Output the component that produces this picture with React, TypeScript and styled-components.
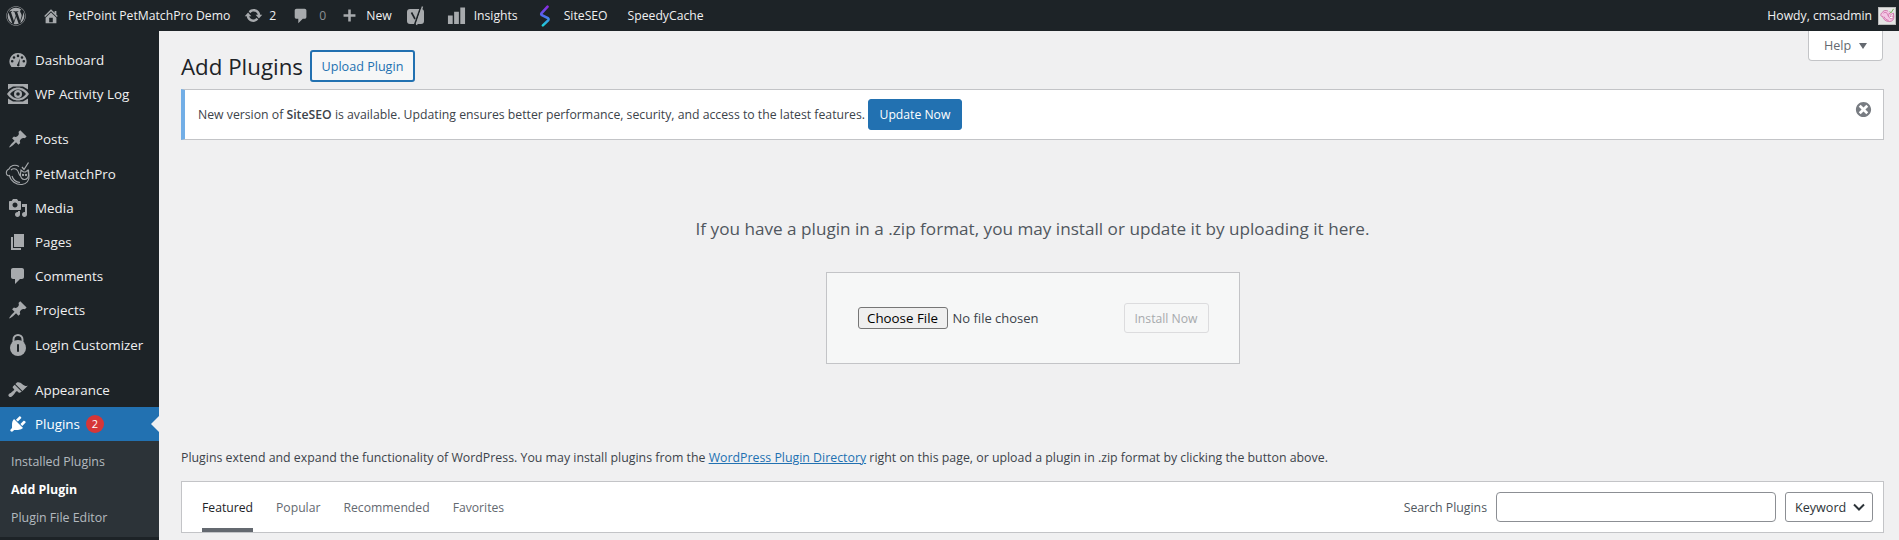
import React from "react";
import styled, { createGlobalStyle } from "styled-components";
import { FaWordpress } from "react-icons/fa";

const FONT = `"Open Sans", "Noto Sans", sans-serif`;

const Icon = ({ d, size = 20 }: { d: string; size?: number }) => (
  <svg width={size} height={size} viewBox="0 0 20 20" fill="currentColor" aria-hidden="true">
    <path d={d} />
  </svg>
);

const paths = {
  home: "M16 8.5l1.53 1.53-1.06 1.06L10 4.62l-6.47 6.47-1.06-1.06L10 2.5l4 4v-2h2v4zm-6-2.46l6 5.99V18H4v-5.97zM12 17v-5H8v5h4z",
  update:
    "M10.2 3.28c3.53 0 6.43 2.61 6.92 6h2.08l-3.5 4-3.5-4h2.32c-.45-1.97-2.21-3.45-4.32-3.45-1.45 0-2.73.71-3.54 1.78L4.95 5.66C6.23 4.2 8.11 3.28 10.2 3.28zm-.4 13.44c-3.52 0-6.43-2.61-6.92-6H.8l3.5-4c1.17 1.33 2.33 2.67 3.5 4H5.48c.45 1.97 2.21 3.45 4.32 3.45 1.45 0 2.73-.71 3.54-1.78l1.71 1.95c-1.28 1.46-3.15 2.38-5.25 2.38z",
  comment: "M5 2h9c1.1 0 2 .9 2 2v7c0 1.1-.9 2-2 2h-2l-5 5v-5H5c-1.1 0-2-.9-2-2V4c0-1.1.9-2 2-2z",
  plus: "M8.5 3h3v5.5H17v3h-5.5V17h-3v-5.5H3v-3h5.5z",
  bars: "M1 10h5v9H1zM7.5 6h5v13h-5zM14 1.5h5V19h-5z",
  dashboard:
    "M10 3a8.5 8.5 0 0 0-6.6 13.9h13.2A8.5 8.5 0 0 0 10 3zM6 6.2a1.3 1.3 0 1 1 0 2.6 1.3 1.3 0 0 1 0-2.6zm4-1.6a1.3 1.3 0 1 1 0 2.6 1.3 1.3 0 0 1 0-2.6zm4 1.6a1.3 1.3 0 1 1 0 2.6 1.3 1.3 0 0 1 0-2.6zM4.2 10a1.3 1.3 0 1 1 0 2.6 1.3 1.3 0 0 1 0-2.6zm11.6 0a1.3 1.3 0 1 1 0 2.6 1.3 1.3 0 0 1 0-2.6zM9 15.3c0-.5.2-1 .6-1.3L12 8.6l-.7 5.8c.1.3.2.6.2.9 0 .6-.5 1.2-1.2 1.2S9 15.9 9 15.3z",
  pin: "M10.44 3.02l1.82-1.82 6.36 6.35-1.83 1.82c-1.05-.68-2.48-.57-3.41.36l-.75.75c-.92.93-1.04 2.35-.35 3.41l-1.83 1.82-2.41-2.41-2.8 2.79c-.42.42-3.38 2.71-3.8 2.29s1.86-3.39 2.28-3.81l2.79-2.79L4.1 9.36l1.83-1.82c1.05.69 2.48.57 3.4-.36l.75-.75c.93-.92 1.05-2.35.36-3.41z",
  media:
    "M13 11V4c0-.55-.45-1-1-1h-1.67L9 1H5L3.67 3H2c-.55 0-1 .45-1 1v7c0 .55.45 1 1 1h10c.55 0 1-.45 1-1zM7 4.5c1.38 0 2.5 1.12 2.5 2.5S8.38 9.5 7 9.5 4.5 8.38 4.5 7 5.62 4.5 7 4.5zM14 6h5v10.5c0 1.38-1.12 2.5-2.5 2.5S14 17.88 14 16.5s1.12-2.5 2.5-2.5c.17 0 .34.02.5.05V9h-3V6zm-4 8.05V13h2v3.5c0 1.38-1.12 2.5-2.5 2.5S7 17.88 7 16.5 8.12 14 9.5 14c.17 0 .34.02.5.05z",
  page: "M6 15V2h10v13H6zm-1 1h8v2H3V5h2v11z",
  appearance:
    "M14.48 11.06L7.41 3.99l1.5-1.5c.5-.56 2.3-.47 3.51.32 1.21.8 1.43 1.28 2.91 2.1 1.18.64 2.45 1.26 4.45.85zm-.71.71L6.7 4.7 4.93 6.47c-.39.39-.39 1.02 0 1.41l1.06 1.06c.39.39.39 1.03 0 1.42-.6.6-1.43 1.11-2.21 1.69-.35.26-.7.53-1.01.84C1.43 13.23.4 14.22.4 15.25c0 .29.09.58.27.86.17.28.42.53.7.7.28.17.57.26.86.26 1.03 0 2.02-1.03 3.36-2.37.31-.31.58-.66.84-1.01.58-.78 1.09-1.61 1.69-2.21.39-.39 1.03-.39 1.42 0l1.06 1.06c.39.39 1.02.39 1.41 0z",
  plugins:
    "M13.11 4.36L9.87 7.6 8 5.73l3.24-3.24c.35-.34 1.05-.2 1.56.32.52.51.66 1.21.31 1.55zm-8 1.77l.91-1.12 9.01 9.01-1.19.84c-.71.71-2.63 1.16-3.82 1.16H6.14L4.9 17.26c-.59.59-1.54.59-2.12 0-.59-.58-.59-1.53 0-2.12l1.24-1.24v-3.88c0-1.13.4-3.19 1.09-3.89zm7.26 3.97l3.24-3.24c.34-.35 1.04-.21 1.55.31.52.51.66 1.21.31 1.55l-3.24 3.25z",
  dismiss:
    "M10 2c4.42 0 8 3.58 8 8s-3.58 8-8 8-8-3.58-8-8 3.58-8 8-8zm5 11l-3-3 3-3-2-2-3 3-3-3-2 2 3 3-3 3 2 2 3-3 3 3z",
};

const YoastIcon = () => (
  <svg width="20" height="22" viewBox="0 0 20 22" aria-hidden="true">
    <rect x="1" y="4" width="17" height="15" rx="3" fill="#a7aaad" />
    <path d="M5.5 7.5 9 14" fill="none" stroke="#1d2327" strokeWidth="1.6" />
    <path d="M15 1.5 8.5 20" fill="none" stroke="#1d2327" strokeWidth="1.6" />
    <path d="M16.5 1.5 10.5 20" fill="none" stroke="#a7aaad" strokeWidth="1.4" />
  </svg>
);

const SiteSeoIcon = () => (
  <svg width="12" height="22" viewBox="0 0 14 26" fill="none" aria-hidden="true">
    <defs>
      <linearGradient id="siteseo" x1="0" y1="0" x2="0" y2="1">
        <stop offset="0" stopColor="#8a2be2" />
        <stop offset="0.5" stopColor="#4f6cf0" />
        <stop offset="1" stopColor="#1fd0d8" />
      </linearGradient>
    </defs>
    <path
      d="M10 2 3 9.5c-.8 1-.6 2 .4 2.6l7 3.4c1 .7 1.1 1.8.3 2.7L4.5 24"
      stroke="url(#siteseo)"
      strokeWidth="3"
      strokeLinecap="round"
    />
  </svg>
);

const ActivityIcon = () => (
  <svg width="24" height="22" viewBox="0 0 24 22" aria-hidden="true">
    <path d="M2 1h20v5.5L17 3.5H7L2 6.5zM2 21h20v-5.5l-5 3H7l-5-3z" fill="#a7aaad" />
    <path d="M1 11C4 6.5 8 4.5 12 4.5S20 6.5 23 11c-3 4.5-7 6.5-11 6.5S4 15.5 1 11z" fill="#a7aaad" />
    <path d="M4 11c2.5-3 5-4.5 8-4.5s5.5 1.500 8 4.5c-2.500 3-5 4.500-8 4.500S6.500 14 4 11z" fill="#1d2327" />
    <circle cx="12" cy="11" r="4" fill="#a7aaad" />
    <circle cx="12" cy="11" r="1.8" fill="#1d2327" />
  </svg>
);

const PetIcon = ({
  size = 26,
  color = "#a7aaad",
  fill = "none",
  check = "#a7aaad",
}: {
  size?: number;
  color?: string;
  fill?: string;
  check?: string;
}) => (
  <svg width={size} height={size} viewBox="0 0 26 26" fill="none" stroke={color} strokeWidth="1.1" aria-hidden="true">
    <path
      d="M14 5.5C10 3 5 4.5 4 8c-2 1-3 3-2.5 5 .5 1.5 2 2 3 1.500C5.500 20 11 24 17 23.500c4.500-.5 7.500-4 7-8.500l-.5-6"
      fill={fill}
    />
    <path d="M6 9c2-2 5-1.5 6.5.5 1.5 2 1 4 3 5.5" />
    <path
      d="M15.5 13l.5-4 2.5 2h2l2.5-2 .5 4c.5 3-1.5 5.5-4 5.5s-4.5-2.5-4-5.5z"
      fill={fill === "none" ? "none" : "#fff"}
    />
    <path d="M7 15c1 3.5 4 6 8 6.5" />
    <path d="M17 6l2 2.5L23.5 1.5" strokeWidth="1.3" stroke={check} />
    <circle cx="18" cy="14" r=".6" fill={color} />
    <circle cx="21" cy="14" r=".6" fill={color} />
  </svg>
);

const LockIcon = () => (
  <svg width="20" height="24" viewBox="0 0 20 24" aria-hidden="true">
    <path d="M5.5 10V6.5a4.5 4.5 0 0 1 9 0V10" fill="none" stroke="#a7aaad" strokeWidth="2" />
    <circle cx="10" cy="15" r="8" fill="#a7aaad" />
    <rect x="9" y="11" width="2" height="8" rx="1" fill="#1d2327" />
  </svg>
);

const GlobalStyle = createGlobalStyle`
  html, body { margin: 0; padding: 0; height: 540px; overflow: hidden; background: #f0f0f1; }
  * { box-sizing: border-box; }
  body { font-family: ${FONT}; font-size: 12.4px; color: #3c434a; }
`;

const Page = styled.div`
  width: 1899px;
  height: 540px;
  display: flex;
  flex-direction: column;
  overflow: hidden;
`;

const AdminBar = styled.header`
  height: 31px;
  flex: none;
  display: flex;
  align-items: center;
  background: #1d2327;
  color: #f0f0f1;
  padding: 0 3px 0 6px;
`;

const BarGroup = styled.div`
  display: flex;
  align-items: center;
  height: 100%;
`;

const BarSpacer = styled.div`
  flex: 1;
`;

const BarItem = styled.div<{ $gap?: number; $left?: number; $muted?: boolean }>`
  display: flex;
  align-items: center;
  gap: ${(p) => p.$gap ?? 6}px;
  margin-left: ${(p) => p.$left ?? 0}px;
  font-size: 12.2px;
  color: ${(p) => (p.$muted ? "#8c8f94" : "#f0f0f1")};
  white-space: nowrap;
  svg { color: #a7aaad; flex: none; }
`;

const Avatar = styled.div`
  width: 18px;
  height: 18px;
  background: #e4e4e4;
  border: 1px solid #bbb;
  display: flex;
  align-items: center;
  justify-content: center;
  svg { display: block; }
`;

const Body = styled.div`
  flex: 1;
  display: flex;
  min-height: 0;
`;

const Sidebar = styled.nav`
  width: 159px;
  flex: none;
  background: #1d2327;
  padding-top: 12px;
`;

const MenuItem = styled.div<{ $active?: boolean; $after?: boolean }>`
  position: relative;
  height: 34.2px;
  margin-bottom: ${(p) => (p.$after ? 11 : 0)}px;
  display: flex;
  align-items: center;
  font-size: 13.4px;
  color: ${(p) => (p.$active ? "#fff" : "#f0f0f1")};
  background: ${(p) => (p.$active ? "#2271b1" : "transparent")};
  &::after {
    content: "";
    display: ${(p) => (p.$active ? "block" : "none")};
    position: absolute;
    right: 0;
    top: 50%;
    margin-top: -8px;
    border: 8px solid transparent;
    border-right-color: #f0f0f1;
    border-left-width: 0;
  }
`;

const MenuIcon = styled.span<{ $active?: boolean }>`
  width: 35px;
  flex: none;
  display: flex;
  align-items: center;
  justify-content: center;
  color: ${(p) => (p.$active ? "#fff" : "#a7aaad")};
`;

const Badge = styled.span`
  width: 18px;
  height: 18px;
  margin-left: 6px;
  border-radius: 50%;
  background: #d63638;
  color: #fff;
  font-size: 11px;
  display: flex;
  align-items: center;
  justify-content: center;
`;

const SubMenu = styled.div`
  background: #2c3338;
  padding: 7px 0 6px;
`;

const SubItem = styled.div<{ $current?: boolean }>`
  height: 27.8px;
  padding-left: 11px;
  display: flex;
  align-items: center;
  font-size: 12.4px;
  font-weight: ${(p) => (p.$current ? 700 : 400)};
  color: ${(p) => (p.$current ? "#fff" : "rgba(240,246,252,.7)")};
`;

const Main = styled.main`
  flex: 1;
  min-width: 0;
  position: relative;
  padding: 0 15px 0 22px;
`;

const HelpTab = styled.div`
  position: absolute;
  top: 0;
  right: 16px;
  width: 75px;
  height: 30px;
  background: #fff;
  border: 1px solid #c3c4c7;
  border-top: none;
  border-radius: 0 0 4px 4px;
  display: flex;
  align-items: center;
  justify-content: center;
  gap: 8px;
  font-size: 12.6px;
  color: #646970;
`;

const HelpCaret = styled.span`
  width: 0;
  height: 0;
  border: 4.5px solid transparent;
  border-top: 6px solid #646970;
  border-bottom: none;
`;

const Heading = styled.div`
  display: flex;
  align-items: center;
  gap: 7px;
  height: 32px;
  margin-top: 19px;
`;

const Title = styled.h1`
  margin: 0;
  font-size: 22.3px;
  font-weight: 400;
  color: #1d2327;
`;

const OutlineButton = styled.button`
  height: 32px;
  width: 105px;
  padding: 0;
  background: #f6f7f7;
  border: 2px solid #2271b1;
  border-radius: 3px;
  color: #2271b1;
  font: 400 12.6px ${FONT};
`;

const Notice = styled.div`
  position: relative;
  margin-top: 7px;
  height: 51px;
  background: #fff;
  border: 1px solid #c3c4c7;
  border-left: 4px solid #72aee6;
  padding-left: 13px;
  display: flex;
  align-items: center;
  gap: 3px;
  font-size: 12.25px;
  color: #3c434a;
  b { font-weight: 600; }
`;

const PrimaryButton = styled.button`
  height: 31px;
  width: 94px;
  padding: 0;
  background: #2271b1;
  border: 1px solid #2271b1;
  border-radius: 3px;
  color: #fff;
  font: 400 12.2px ${FONT};
`;

const Dismiss = styled.span`
  position: absolute;
  top: 10px;
  right: 10px;
  color: #787c82;
  line-height: 0;
`;

const UploadIntro = styled.p`
  margin: 77px 0 0;
  text-align: center;
  font-size: 17.15px;
  line-height: 24px;
  color: #50575e;
`;

const UploadBox = styled.div`
  width: 414px;
  height: 92px;
  margin: 31px auto 0;
  padding: 0 30px 0 31px;
  background: #f6f7f7;
  border: 1px solid #c3c4c7;
  display: flex;
  align-items: center;
`;

const ChooseButton = styled.button`
  width: 90px;
  height: 22px;
  padding: 0;
  background: #efefef;
  border: 1px solid #767676;
  border-radius: 3px;
  color: #000;
  font: 400 13.33px ${FONT};
`;

const FileLabel = styled.span`
  flex: 1;
  margin-left: 5px;
  font-size: 13px;
  color: #3c434a;
`;

const DisabledButton = styled.button`
  width: 85px;
  height: 30px;
  padding: 0;
  background: #f6f7f7;
  border: 1px solid #dcdcde;
  border-radius: 3px;
  color: #a7aaad;
  font: 400 12.2px ${FONT};
`;

const Intro = styled.p`
  margin: 84px 0 0;
  font-size: 12.35px;
  line-height: 20px;
  color: #3c434a;
  a { color: #2271b1; text-decoration: underline; }
`;

const FilterBar = styled.div`
  margin-top: 13px;
  height: 52px;
  background: #fff;
  border: 1px solid #c3c4c7;
  display: flex;
  align-items: stretch;
  padding: 0 10px 0 20px;
`;

const Tab = styled.div<{ $current?: boolean }>`
  display: flex;
  align-items: center;
  margin-right: 23px;
  font-size: 12.2px;
  color: ${(p) => (p.$current ? "#1d2327" : "#646970")};
  border-bottom: 4px solid ${(p) => (p.$current ? "#646970" : "transparent")};
  padding-top: 4px;
`;

const SearchForm = styled.div`
  margin-left: auto;
  display: flex;
  align-items: center;
  font-size: 12.3px;
  color: #50575e;
`;

const SearchInput = styled.div`
  width: 280px;
  height: 30px;
  margin-left: 9px;
  background: #fff;
  border: 1px solid #8c8f94;
  border-radius: 4px;
`;

const KeywordSelect = styled.div`
  width: 88px;
  height: 30px;
  margin-left: 9px;
  padding: 0 6px 0 9px;
  background: #fff;
  border: 1px solid #8c8f94;
  border-radius: 3px;
  display: flex;
  align-items: center;
  justify-content: space-between;
  font-size: 12.6px;
  color: #2c3338;
`;

export default function App() {
  return (
    <Page>
      <GlobalStyle />
      <AdminBar>
        <BarGroup>
          <BarItem $gap={0}>
            <FaWordpress size={20} />
          </BarItem>
          <BarItem $left={16} $gap={8}>
            <Icon d={paths.home} size={18} />
            PetPoint PetMatchPro Demo
          </BarItem>
          <BarItem $left={14} $gap={6}>
            <Icon d={paths.update} size={19} />2
          </BarItem>
          <BarItem $left={16} $gap={9} $muted>
            <Icon d={paths.comment} size={18} />0
          </BarItem>
          <BarItem $left={15} $gap={8}>
            <Icon d={paths.plus} size={17} />
            New
          </BarItem>
          <BarItem $left={14}>
            <YoastIcon />
          </BarItem>
          <BarItem $left={21} $gap={8}>
            <Icon d={paths.bars} size={19} />
            Insights
          </BarItem>
          <BarItem $left={21} $gap={13}>
            <SiteSeoIcon />
            SiteSEO
          </BarItem>
          <BarItem $left={20}>SpeedyCache</BarItem>
        </BarGroup>
        <BarSpacer />
        <BarItem>
          Howdy, cmsadmin
          <Avatar>
            <PetIcon size={15} color="#c2478f" fill="#f3c6e4" check="#55a630" />
          </Avatar>
        </BarItem>
      </AdminBar>
      <Body>
        <Sidebar>
          <MenuItem>
            <MenuIcon><Icon d={paths.dashboard} /></MenuIcon>
            Dashboard
          </MenuItem>
          <MenuItem $after>
            <MenuIcon><ActivityIcon /></MenuIcon>
            WP Activity Log
          </MenuItem>
          <MenuItem>
            <MenuIcon><Icon d={paths.pin} /></MenuIcon>
            Posts
          </MenuItem>
          <MenuItem>
            <MenuIcon><PetIcon /></MenuIcon>
            PetMatchPro
          </MenuItem>
          <MenuItem>
            <MenuIcon><Icon d={paths.media} /></MenuIcon>
            Media
          </MenuItem>
          <MenuItem>
            <MenuIcon><Icon d={paths.page} /></MenuIcon>
            Pages
          </MenuItem>
          <MenuItem>
            <MenuIcon><Icon d={paths.comment} /></MenuIcon>
            Comments
          </MenuItem>
          <MenuItem>
            <MenuIcon><Icon d={paths.pin} /></MenuIcon>
            Projects
          </MenuItem>
          <MenuItem $after>
            <MenuIcon><LockIcon /></MenuIcon>
            Login Customizer
          </MenuItem>
          <MenuItem>
            <MenuIcon><Icon d={paths.appearance} /></MenuIcon>
            Appearance
          </MenuItem>
          <MenuItem $active>
            <MenuIcon $active><Icon d={paths.plugins} /></MenuIcon>
            Plugins
            <Badge>2</Badge>
          </MenuItem>
          <SubMenu>
            <SubItem>Installed Plugins</SubItem>
            <SubItem $current>Add Plugin</SubItem>
            <SubItem>Plugin File Editor</SubItem>
          </SubMenu>
        </Sidebar>
        <Main>
          <HelpTab>
            Help
            <HelpCaret />
          </HelpTab>
          <Heading>
            <Title>Add Plugins</Title>
            <OutlineButton>Upload Plugin</OutlineButton>
          </Heading>
          <Notice>
            <span>
              New version of <b>SiteSEO</b> is available. Updating ensures better performance, security, and access to the latest features.
            </span>
            <PrimaryButton>Update Now</PrimaryButton>
            <Dismiss><Icon d={paths.dismiss} size={19} /></Dismiss>
          </Notice>
          <UploadIntro>If you have a plugin in a .zip format, you may install or update it by uploading it here.</UploadIntro>
          <UploadBox>
            <ChooseButton>Choose File</ChooseButton>
            <FileLabel>No file chosen</FileLabel>
            <DisabledButton>Install Now</DisabledButton>
          </UploadBox>
          <Intro>
            Plugins extend and expand the functionality of WordPress. You may install plugins from the <a href="#directory">WordPress Plugin Directory</a> right on this page, or upload a plugin in .zip format by clicking the button above.
          </Intro>
          <FilterBar>
            <Tab $current>Featured</Tab>
            <Tab>Popular</Tab>
            <Tab>Recommended</Tab>
            <Tab>Favorites</Tab>
            <SearchForm>
              Search Plugins
              <SearchInput />
              <KeywordSelect>
                Keyword
                <svg width="14" height="14" viewBox="0 0 14 14" fill="none" stroke="#2c3338" strokeWidth="2" aria-hidden="true">
                  <path d="M2 4.5l5 5 5-5" />
                </svg>
              </KeywordSelect>
            </SearchForm>
          </FilterBar>
        </Main>
      </Body>
    </Page>
  );
}
